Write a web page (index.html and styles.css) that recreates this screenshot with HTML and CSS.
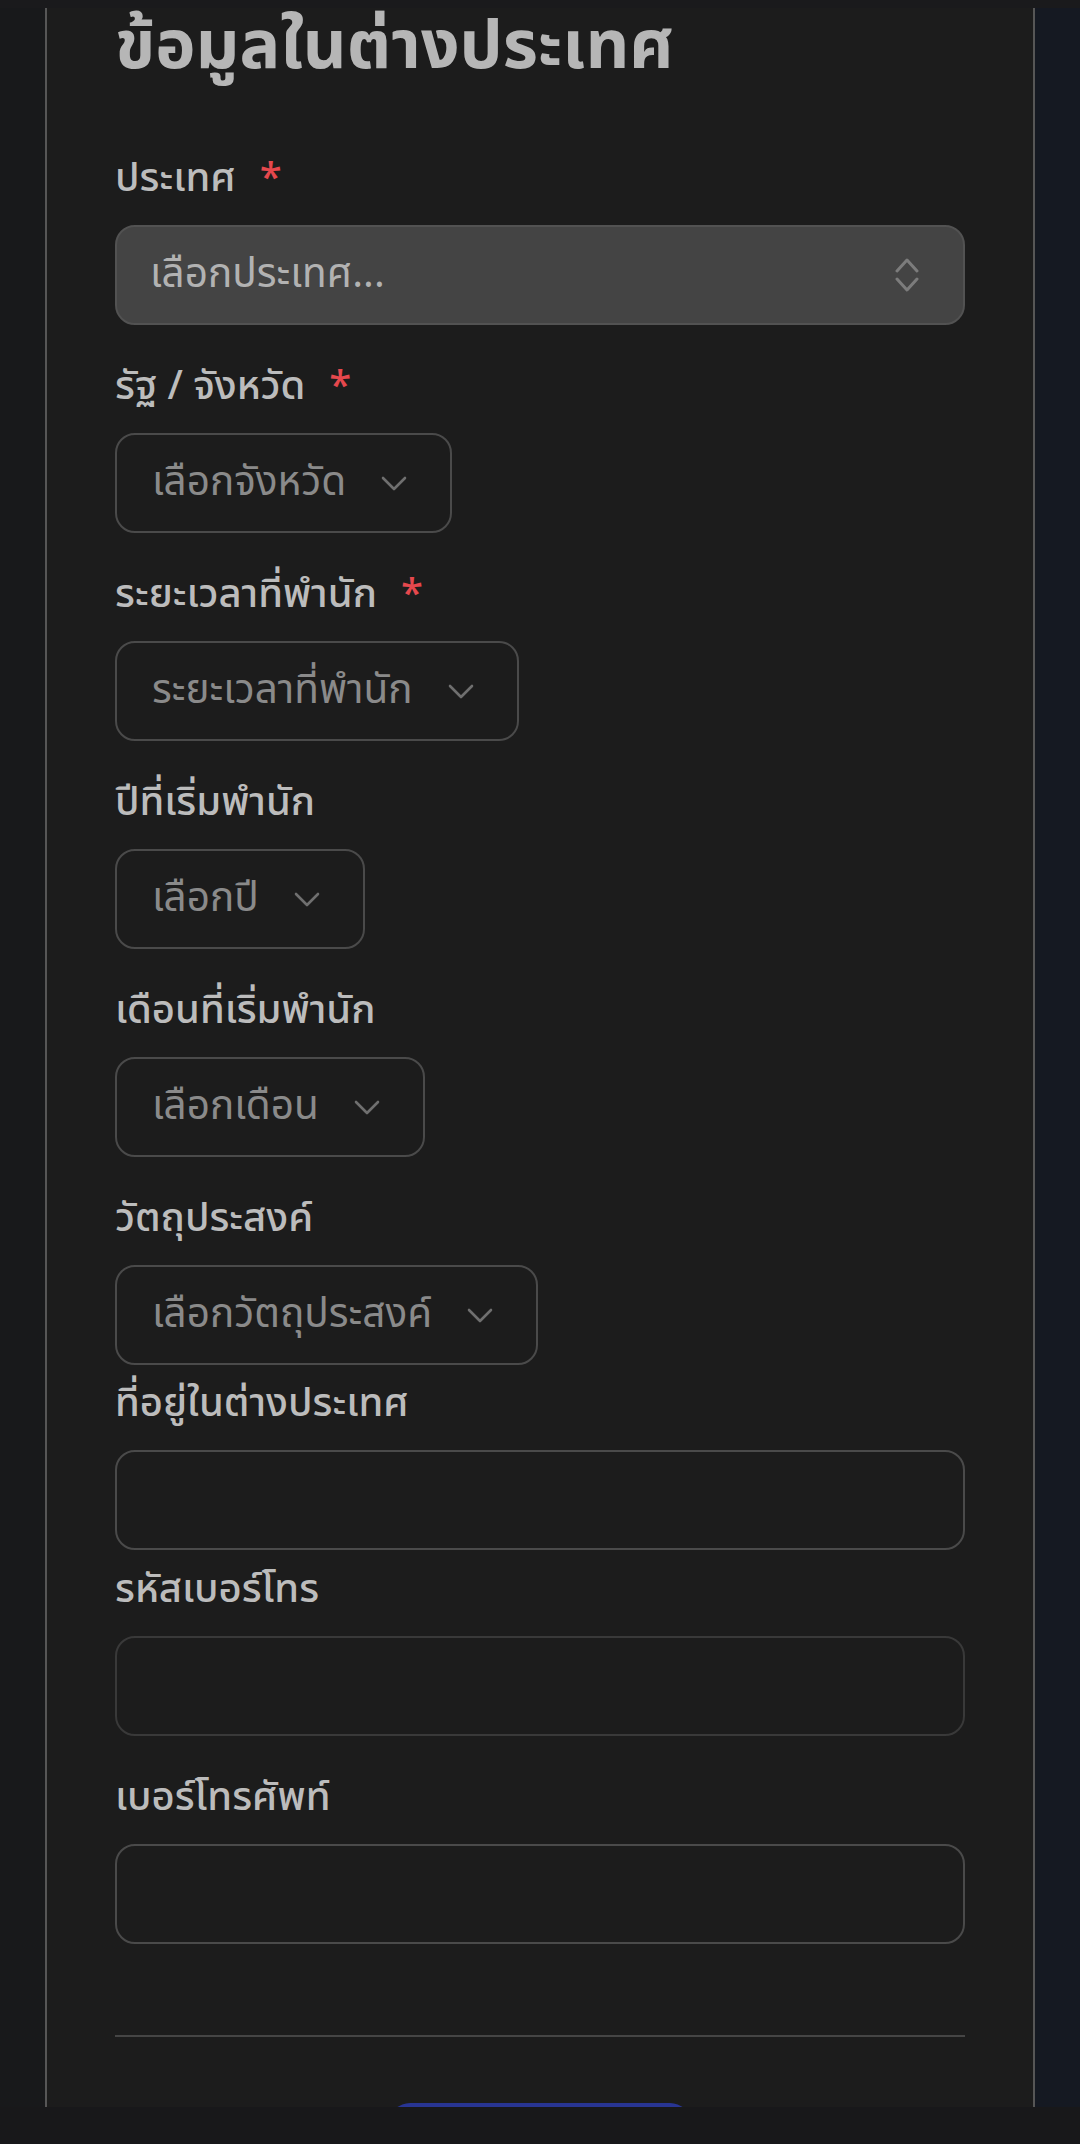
FILE: index.html
```html
<!DOCTYPE html>
<html lang="th">
<head>
<meta charset="utf-8">
<title>ข้อมูลในต่างประเทศ</title>
<link rel="stylesheet" href="styles.css">
</head>
<body>
<div class="top-strip"></div>
<div class="shell">
  <div class="gutter gutter--left"></div>
  <main class="card">
    <h1 class="title">ข้อมูลในต่างประเทศ</h1>

    <div class="field">
      <div class="label">ประเทศ<span class="req">*</span></div>
      <div class="select select--filled">
        <span class="select__text">เลือกประเทศ...</span>
        <svg class="icon-updown" viewBox="0 0 24 36" width="24" height="36" aria-hidden="true">
          <polyline points="2,14 12,3 22,14" fill="none" stroke="currentColor" stroke-width="3" stroke-linecap="round" stroke-linejoin="round"/>
          <polyline points="2,22 12,33 22,22" fill="none" stroke="currentColor" stroke-width="3" stroke-linecap="round" stroke-linejoin="round"/>
        </svg>
      </div>
    </div>

    <div class="field">
      <div class="label">รัฐ / จังหวัด<span class="req">*</span></div>
      <div class="select">
        <span class="select__text">เลือกจังหวัด</span>
        <svg class="icon-chevron" viewBox="0 0 26 15" width="26" height="15" aria-hidden="true"><polyline points="2,2 13,13 24,2" fill="none" stroke="currentColor" stroke-width="2.6" stroke-linecap="round" stroke-linejoin="round"/></svg>
      </div>
    </div>

    <div class="field">
      <div class="label">ระยะเวลาที่พำนัก<span class="req">*</span></div>
      <div class="select">
        <span class="select__text">ระยะเวลาที่พำนัก</span>
        <svg class="icon-chevron" viewBox="0 0 26 15" width="26" height="15" aria-hidden="true"><polyline points="2,2 13,13 24,2" fill="none" stroke="currentColor" stroke-width="2.6" stroke-linecap="round" stroke-linejoin="round"/></svg>
      </div>
    </div>

    <div class="field">
      <div class="label">ปีที่เริ่มพำนัก</div>
      <div class="select">
        <span class="select__text">เลือกปี</span>
        <svg class="icon-chevron" viewBox="0 0 26 15" width="26" height="15" aria-hidden="true"><polyline points="2,2 13,13 24,2" fill="none" stroke="currentColor" stroke-width="2.6" stroke-linecap="round" stroke-linejoin="round"/></svg>
      </div>
    </div>

    <div class="field">
      <div class="label">เดือนที่เริ่มพำนัก</div>
      <div class="select">
        <span class="select__text">เลือกเดือน</span>
        <svg class="icon-chevron" viewBox="0 0 26 15" width="26" height="15" aria-hidden="true"><polyline points="2,2 13,13 24,2" fill="none" stroke="currentColor" stroke-width="2.6" stroke-linecap="round" stroke-linejoin="round"/></svg>
      </div>
    </div>

    <div class="field field--tight">
      <div class="label">วัตถุประสงค์</div>
      <div class="select">
        <span class="select__text">เลือกวัตถุประสงค์</span>
        <svg class="icon-chevron" viewBox="0 0 26 15" width="26" height="15" aria-hidden="true"><polyline points="2,2 13,13 24,2" fill="none" stroke="currentColor" stroke-width="2.6" stroke-linecap="round" stroke-linejoin="round"/></svg>
      </div>
    </div>

    <div class="field field--tight field--tight-2">
      <div class="label">ที่อยู่ในต่างประเทศ</div>
      <input class="input" type="text">
    </div>

    <div class="field">
      <div class="label">รหัสเบอร์โทร</div>
      <input class="input input--faint" type="text">
    </div>

    <div class="field">
      <div class="label">เบอร์โทรศัพท์</div>
      <input class="input" type="text">
    </div>

    <hr class="divider">

    <div class="actions">
      <button class="btn-primary" type="button" aria-label="บันทึก"></button>
    </div>
  </main>
  <div class="gutter gutter--right"></div>
</div>
<div class="bottom-bar"></div>
</body>
</html>
```

FILE: styles.css
```css
* { box-sizing: border-box; }

html, body {
  margin: 0;
  padding: 0;
}

body {
  background: #18181a;
  font-family: "Noto Sans Thai", "Noto Sans", "DejaVu Sans", sans-serif;
  color: #bababa;
  width: 1080px;
  height: 2144px;
  overflow: hidden;
}

.top-strip {
  height: 8px;
  background: #1a1a1c;
}

.shell {
  display: flex;
  align-items: stretch;
}

.gutter--left {
  width: 45px;
  flex: none;
  background: #18191b;
}

.gutter--right {
  flex: 1;
  background: #151922;
}

.card {
  width: 990px;
  flex: none;
  background: #1c1c1c;
  border-left: 2px solid #565656;
  border-right: 2px solid #565656;
  padding: 0 68px 40px;
}

.title {
  margin: 0 0 64px;
  font-size: 68px;
  font-weight: 700;
  line-height: 79px;
  color: #b6b6b6;
}

.field {
  margin-bottom: 34px;
}

.field--tight {
  margin-bottom: 11px;
}

.field--tight-2 {
  margin-bottom: 12px;
}

.label {
  font-size: 40px;
  font-weight: 500;
  line-height: 56px;
  color: #bcbcbc;
  margin-bottom: 18px;
}

.req {
  color: #e5484d;
  margin-left: 24px;
}

.select {
  display: inline-flex;
  align-items: center;
  gap: 35px;
  height: 100px;
  border: 2px solid #4a4a4a;
  border-radius: 20px;
  padding: 0 43px 0 35px;
  color: #8a8a8a;
  font-size: 40.5px;
  font-weight: 400;
}

.select--filled {
  display: flex;
  justify-content: space-between;
  width: 100%;
  background: #444444;
  border-color: #525252;
  padding: 0 44px 0 33px;
  color: #b2b2b2;
}

.select__text {
  line-height: 1;
}

.icon-chevron {
  color: #6f6f6f;
  flex: none;
}

.icon-updown {
  color: #7c7c7c;
  flex: none;
}

.input {
  display: block;
  width: 100%;
  height: 100px;
  border: 2px solid #4a4a4a;
  border-radius: 20px;
  background: transparent;
  margin: 0;
  padding: 0 35px;
  font: inherit;
  color: #bdbdbd;
}

.input--faint {
  border-color: #393939;
}

.divider {
  margin: 91px 0 0;
  border: 0;
  height: 2px;
  background: #454545;
}

.actions {
  display: flex;
  justify-content: center;
  padding-top: 66px;
}

.btn-primary {
  width: 300px;
  height: 100px;
  border: 0;
  border-radius: 20px;
  background: #283593;
}

.bottom-bar {
  position: fixed;
  left: 0;
  right: 0;
  bottom: 0;
  height: 37px;
  background: #18181a;
  z-index: 2;
}
```
